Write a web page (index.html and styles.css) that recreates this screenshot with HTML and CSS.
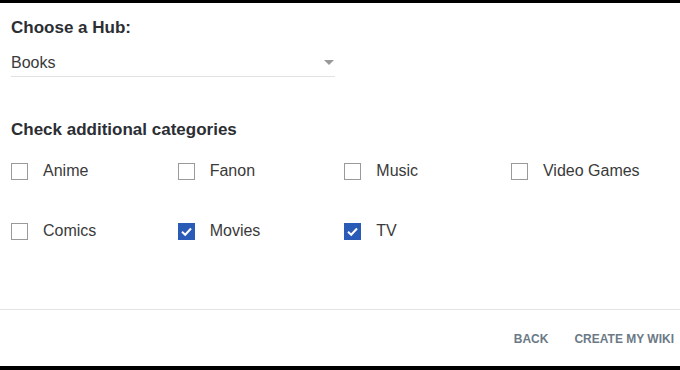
FILE: index.html
```html
<!DOCTYPE html>
<html>
<head>
<meta charset="utf-8">
<link rel="stylesheet" href="styles.css">
</head>
<body>
<div class="panel">
  <div class="content">
    <div class="heading">Choose a Hub:</div>
    <div class="select">
      <span class="select-value">Books</span>
      <span class="select-arrow"></span>
    </div>
    <div class="heading heading-cats">Check additional categories</div>
    <div class="cats">
      <label class="cat"><span class="box"></span><span class="cat-label">Anime</span></label>
      <label class="cat"><span class="box"></span><span class="cat-label">Fanon</span></label>
      <label class="cat"><span class="box"></span><span class="cat-label">Music</span></label>
      <label class="cat"><span class="box"></span><span class="cat-label">Video Games</span></label>
      <label class="cat"><span class="box"></span><span class="cat-label">Comics</span></label>
      <label class="cat"><span class="box box-checked"><svg viewBox="0 0 17 17" width="17" height="17"><polyline points="4,8.8 7.2,11.8 13,5.5" fill="none" stroke="#fff" stroke-width="2"/></svg></span><span class="cat-label">Movies</span></label>
      <label class="cat"><span class="box box-checked"><svg viewBox="0 0 17 17" width="17" height="17"><polyline points="4,8.8 7.2,11.8 13,5.5" fill="none" stroke="#fff" stroke-width="2"/></svg></span><span class="cat-label">TV</span></label>
    </div>
  </div>
  <div class="footer">
    <span class="btn">BACK</span>
    <span class="btn">CREATE MY WIKI</span>
  </div>
</div>
</body>
</html>
```

FILE: styles.css
```css
html, body {
  margin: 0;
  padding: 0;
  background: #000;
}
body {
  width: 680px;
  height: 370px;
  overflow: hidden;
  font-family: "Liberation Sans", Arial, sans-serif;
}
.panel {
  margin-top: 3px;
  height: 363px;
  background: #fff;
  display: flex;
  flex-direction: column;
}
.content {
  padding: 15px 0 0 11px;
  flex: 1;
}
.heading {
  font-size: 17px;
  line-height: 20px;
  font-weight: bold;
  color: #2b2e33;
}
.select {
  margin-top: 15px;
  width: 324px;
  height: 20px;
  padding-bottom: 3px;
  border-bottom: 1px solid #e2e2e2;
  display: flex;
  align-items: center;
  justify-content: space-between;
}
.select-value {
  font-size: 16px;
  line-height: 20px;
  color: #3a3a3a;
}
.select-arrow {
  width: 0;
  height: 0;
  margin-right: 1px;
  margin-bottom: 2px;
  border-left: 5px solid transparent;
  border-right: 5px solid transparent;
  border-top: 5px solid #999;
}
.heading-cats {
  margin-top: 43px;
}
.cats {
  margin-top: 21px;
  display: grid;
  grid-template-columns: repeat(4, 166.67px);
  row-gap: 40px;
}
.cat {
  display: flex;
  align-items: center;
  height: 20px;
}
.box {
  box-sizing: border-box;
  width: 17px;
  height: 17px;
  border: 1px solid #9a9a9a;
  margin-top: 1px;
  flex: none;
  display: flex;
}
.box-checked {
  border: none;
  background: #2a5bb7;
}
.cat-label {
  margin-left: 15px;
  font-size: 16px;
  line-height: 20px;
  color: #3a3a3a;
}
.footer {
  height: 56px;
  border-top: 1px solid #e4e4e4;
  display: flex;
  justify-content: flex-end;
  align-items: center;
  gap: 26px;
  padding-right: 6px;
}
.btn {
  font-size: 12px;
  font-weight: bold;
  line-height: 16px;
  color: #6b7a86;
  margin-top: 2px;
}
```
